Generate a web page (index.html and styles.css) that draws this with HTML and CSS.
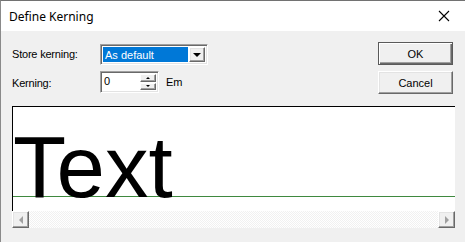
FILE: index.html
```html
<!DOCTYPE html>
<html>
<head>
<meta charset="utf-8">
<link rel="stylesheet" href="styles.css">
</head>
<body>
<div class="window">
  <div class="titlebar">
    <span class="title">Define Kerning</span>
    <svg class="close" width="12" height="12" viewBox="0 0 12 12"><path d="M1 1 L11 11 M11 1 L1 11" stroke="#000" stroke-width="1.1" fill="none"/></svg>
  </div>
  <div class="content">
    <div class="form">
      <label class="label">Store kerning:</label>
      <div class="combo">
        <div class="combo-field"><span class="sel">As default</span></div>
        <div class="combo-btn"><span class="tri-down"></span></div>
      </div>
      <div class="spacer"></div>
      <button class="btn default">OK</button>

      <label class="label">Kerning:</label>
      <div class="spinrow">
        <div class="spin">
          <div class="spin-field">0</div>
          <div class="spin-btns">
            <div class="spin-btn"><span class="tri-up-s"></span></div>
            <div class="spin-btn"><span class="tri-down-s"></span></div>
          </div>
        </div>
        <span class="unit">Em</span>
      </div>
      <div class="spacer"></div>
      <button class="btn">Cancel</button>
    </div>
    <div class="preview">
      <div class="canvas">
        <div class="sample">Text</div>
      </div>
      <div class="hscroll">
        <div class="sbtn"><span class="tri-left"></span></div>
        <div class="track"></div>
        <div class="sbtn"><span class="tri-right"></span></div>
      </div>
    </div>
  </div>
</div>
</body>
</html>
```
FILE: styles.css
```css
* { box-sizing: border-box; }
html, body { margin: 0; padding: 0; }
body { width: 465px; height: 242px; overflow: hidden; background: #f0f0f0; }
.window {
  width: 465px; height: 242px;
  border-top: 1px solid #727272;
  border-left: 1px solid #8a8a8a;
  background: #f0f0f0;
  display: flex; flex-direction: column;
}
.titlebar {
  height: 30px; background: #fff;
  display: flex; align-items: center; justify-content: space-between;
  padding: 0 8px 0 8px;
}
.title { font-family: "Noto Sans", "Open Sans", sans-serif; font-size: 12px; color: #000; }
.close { margin-right: 7px; }
.content { padding: 11px 10px 0 11px; font-family: "Liberation Sans", Arial, sans-serif; font-size: 11px; color: #000; }
.form {
  display: grid;
  grid-template-columns: 88px auto 1fr 75px;
  grid-template-rows: 23px 23px;
  row-gap: 6px;
  margin-right: 2px;
}
.label { align-self: center; letter-spacing: -0.2px; }
.combo {
  align-self: end; width: 108px; height: 21px;
  border: 1px solid; border-color: #a0a0a0 #fff #fff #a0a0a0;
  box-shadow: inset 1px 1px #696969, inset -1px -1px #e3e3e3;
  background: #fff; padding: 2px 2px 2px 2px;
  display: flex;
}
.combo-field { flex: 1; background: #0078d7; color: #fff; display: flex; align-items: center; padding-left: 2px; }
.combo-btn {
  width: 16px; background: #f0f0f0; margin-left: 1px;
  border: 1px solid; border-color: #fff #696969 #696969 #fff;
  box-shadow: inset -1px -1px #a0a0a0, inset 1px 1px #e3e3e3;
  display: flex; align-items: center; justify-content: center;
}
.tri-down { width: 0; height: 0; border-left: 4px solid transparent; border-right: 4px solid transparent; border-top: 4px solid #000; }
.spinrow { display: flex; align-items: center; align-self: start; gap: 7px; }
.spin {
  width: 59px; height: 22px; display: flex;
  border: 1px solid; border-color: #a0a0a0 #fff #fff #a0a0a0;
  box-shadow: inset 1px 1px #696969, inset -1px -1px #e3e3e3;
  background: #fff; padding: 2px 2px 2px 2px;
}
.spin-field { flex: 1; padding-left: 1px; line-height: 15px; }
.spin-btns { width: 16px; display: flex; flex-direction: column; gap: 1px; }
.spin-btn {
  flex: 1; background: #f0f0f0;
  border: 1px solid; border-color: #fff #696969 #696969 #fff;
  box-shadow: inset -1px -1px #a0a0a0;
  display: flex; align-items: center; justify-content: center;
}
.tri-up-s { width: 0; height: 0; border-left: 2px solid transparent; border-right: 2px solid transparent; border-bottom: 2px solid #000; }
.tri-down-s { width: 0; height: 0; border-left: 2px solid transparent; border-right: 2px solid transparent; border-top: 2px solid #000; }
.unit { letter-spacing: -0.2px; }
.btn {
  font-family: "Liberation Sans", Arial, sans-serif; font-size: 11px; color: #000;
  background: #f0f0f0; padding: 0; margin: 0;
  border: 1px solid; border-color: #fff #696969 #696969 #fff;
  box-shadow: inset -1px -1px #a0a0a0, inset 1px 1px #e3e3e3;
  width: 75px; height: 23px;
}
.btn.default {
  border: 1px solid #5a5a5a;
  box-shadow: inset 1px 1px #fff, inset -1px -1px #696969, inset -2px -2px #a0a0a0;
}
.preview { margin-top: 12px; }
.canvas {
  height: 105px;
  background: linear-gradient(to bottom, #fff 89px, #3f893f 89px, #3f893f 90px, #fff 90px);
  border-top: 1px solid #000; border-left: 1px solid #000;
}
.sample {
  font-family: "Liberation Sans", Arial, sans-serif; font-size: 87px; color: #000;
  line-height: 87px; padding-top: 16px; font-kerning: normal;
  white-space: nowrap;
}
.hscroll {
  height: 17px; display: flex;
  background: repeating-conic-gradient(#f1f1f1 0 25%, #fff 0 50%) 0 0 / 2px 2px;
}
.track { flex: 1; }
.sbtn {
  width: 17px; height: 17px; background: #f0f0f0;
  border: 1px solid; border-color: #fff #696969 #696969 #fff;
  box-shadow: inset -1px -1px #a0a0a0, inset 1px 1px #e3e3e3;
  display: flex; align-items: center; justify-content: center;
}
.tri-left { width: 0; height: 0; border-top: 4px solid transparent; border-bottom: 4px solid transparent; border-right: 4px solid #a0a0a0; }
.tri-right { width: 0; height: 0; border-top: 4px solid transparent; border-bottom: 4px solid transparent; border-left: 4px solid #a0a0a0; }
```
